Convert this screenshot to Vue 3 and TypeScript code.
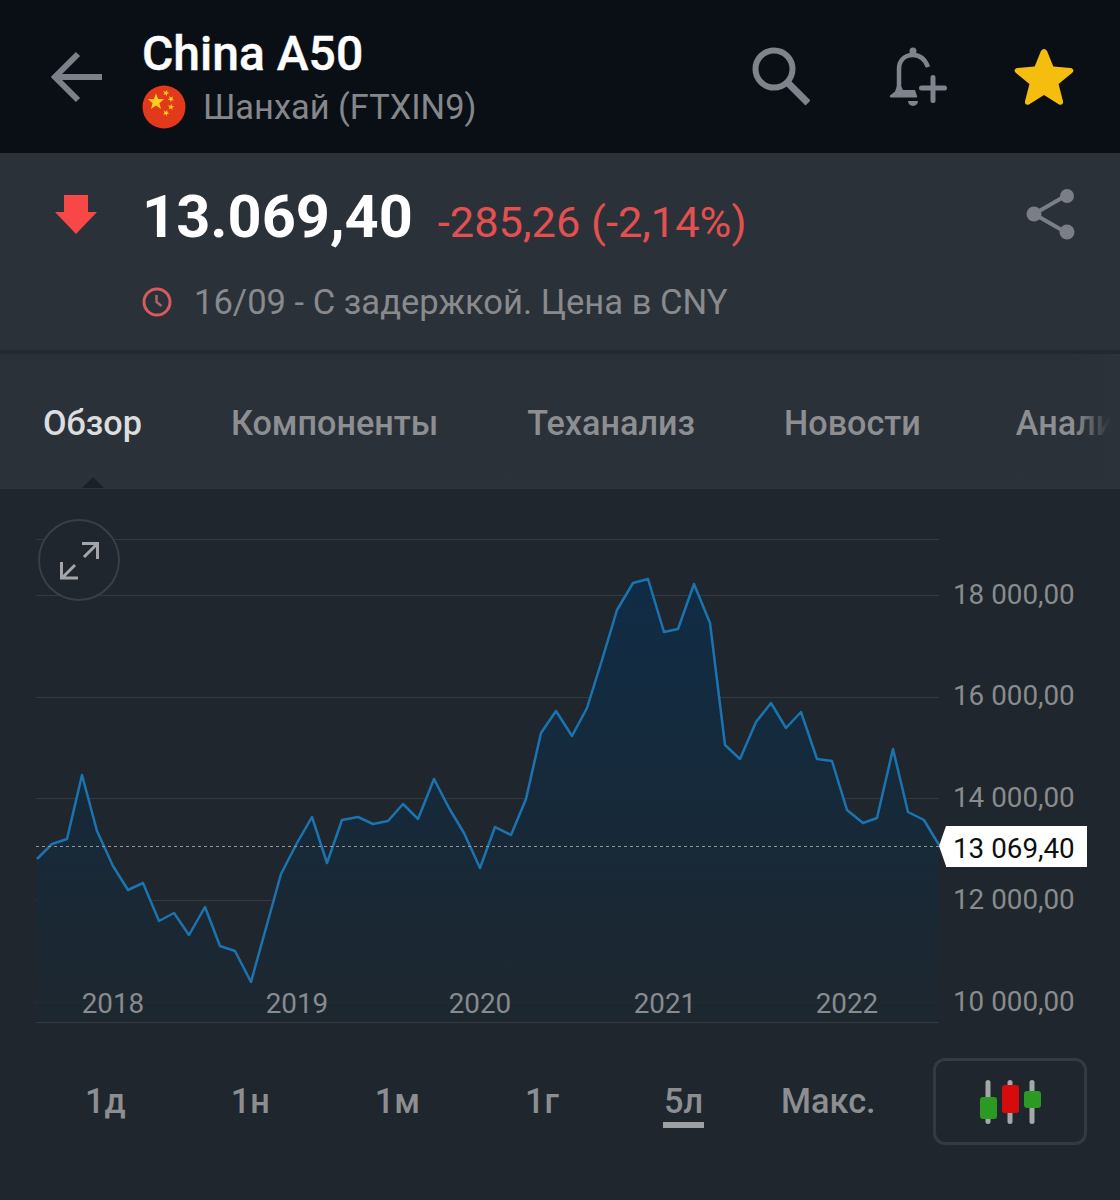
<script setup lang="ts">
const pts: [number, number][] = [
  [37,859],[52,844],[67,839],[82,775],[97,831],[113,866],[128,890],[143,883],[159,921],[174,913],
  [189,935],[205,907],[220,946],[235,951],[251,982],[266,928],[281,874],[297,843],[312,817],[327,863],
  [342,820],[358,817],[373,824],[388,821],[403,804],[418,819],[434,779],[449,808],[464,833],[480,868],
  [495,827],[511,835],[526,799],[541,733],[556,711],[572,736],[587,708],[602,660],[617,610],[633,583],
  [648,579],[664,632],[678,629],[694,584],[710,623],[725,745],[740,759],[756,722],[771,703],[786,728],
  [801,712],[817,759],[832,761],[847,810],[863,823],[877,818],[893,749],[908,812],[924,820],[939,845],
]
const top = 489
const line = pts.map(([x, y]) => `${x},${y - top}`).join(' ')
const area = `37,${1022 - top} ${line} 939,${1022 - top}`
const grid = [539, 595, 697, 798, 900, 1002, 1022].map((y) => y - top)
const axis = [
  { t: '18 000,00', y: 594 },
  { t: '16 000,00', y: 695 },
  { t: '14 000,00', y: 797 },
  { t: '12 000,00', y: 899 },
  { t: '10 000,00', y: 1001 },
]
const years = [
  { t: '2018', x: 113 },
  { t: '2019', x: 297 },
  { t: '2020', x: 480 },
  { t: '2021', x: 665 },
  { t: '2022', x: 847 },
]
const tabs = ['Обзор', 'Компоненты', 'Теханализ', 'Новости', 'Аналитика']
const ranges = ['1д', '1н', '1м', '1г', '5л', 'Макс.']

function star(cx: number, cy: number, r: number, rot = 0): string {
  const out: string[] = []
  for (let i = 0; i < 10; i++) {
    const rad = i % 2 === 0 ? r : r * 0.42
    const a = ((-90 + rot + i * 36) * Math.PI) / 180
    out.push(`${(cx + rad * Math.cos(a)).toFixed(2)},${(cy + rad * Math.sin(a)).toFixed(2)}`)
  }
  return out.join(' ')
}
const flagStars = [
  star(14, 17, 8.5),
  star(24, 8, 3.3, 20),
  star(29, 14, 3.3, 40),
  star(29, 22, 3.3, 10),
  star(24, 28, 3.3, 25),
]
</script>

<template>
  <div class="page">
    <header class="topbar">
      <svg class="back" width="56" height="52" viewBox="0 0 56 52" fill="none" stroke="#7d8088" stroke-width="6">
        <path d="M52 26H6M28 3 5 26l23 23" />
      </svg>
      <div class="title-block">
        <div class="title">China A50</div>
        <div class="subtitle">
          <svg class="flag" width="44" height="44" viewBox="0 0 44 44">
            <circle cx="22" cy="22" r="21.5" fill="#e3391b" />
            <polygon v-for="(s, i) in flagStars" :key="i" :points="s" fill="#f8cf20" />
          </svg>
          <span>Шанхай (FTXIN9)</span>
        </div>
      </div>
      <div class="actions">
        <svg class="ic-search" width="60" height="60" viewBox="0 0 60 60" fill="none" stroke="#7f838b">
          <circle cx="24" cy="23" r="18.500" stroke-width="6" />
          <path d="M38 37 58 57" stroke-width="7" />
        </svg>
        <svg class="ic-bell" width="60" height="60" viewBox="0 0 60 60" fill="none" stroke="#7f838b">
          <path d="M39 21C36 13 31 9 24 9 15 9 10 15 10 23V42" stroke-width="4.500" />
          <circle cx="24" cy="5" r="3.500" fill="#7f838b" stroke="none" />
          <path d="M8 40h4l2 4h12l2 6c.5 1 0 1.500-1 1.500H2c-1 0-1.500-1-1-2l5-4z" fill="#7f838b" stroke="none" />
          <path d="M19 55h10a5 5 0 0 1-10 0z" fill="#7f838b" stroke="none" />
          <path d="M44 31.500v23M32.500 42h23" stroke-width="5" stroke-linecap="round" />
        </svg>
        <svg class="ic-star" width="60" height="60" viewBox="2.600 0.300 54.800 54.800">
          <path d="M30 3c1.300 0 2.300.8 2.900 2.200l5.600 13.800 15.600 1.300c2.800.3 3.700 2.700 1.700 4.500L43.300 35l4 15.600c.6 2.800-1.500 4.300-3.900 2.900L30 45l-13.400 8.500c-2.400 1.400-4.500-.1-3.900-2.900l4-15.600L4.200 24.800c-2-1.800-1.100-4.200 1.700-4.500l15.600-1.300 5.600-13.800C27.700 3.800 28.700 3 30 3z" fill="#f5bd0e" />
        </svg>
      </div>
    </header>

    <section class="quote">
      <div class="quote-main">
        <svg class="down" width="42" height="40" viewBox="0 0 42 40">
          <path d="M9 0h24v17h9L21 39 0 17h9z" fill="#f74747" />
        </svg>
        <div class="price">13.069,40</div>
        <div class="change">-285,26 (-2,14%)</div>
        <svg class="share" width="50" height="54" viewBox="0 0 50 54" fill="#7a7e86" stroke="#7a7e86" stroke-width="4">
          <path d="M8 27 41 8M8 27l33 19" fill="none" />
          <circle cx="41" cy="9" r="7" stroke="none" />
          <circle cx="8" cy="27" r="7.500" stroke="none" />
          <circle cx="41" cy="45" r="7.500" stroke="none" />
        </svg>
      </div>
      <div class="quote-meta">
        <svg width="30" height="30" viewBox="0 0 30 30" fill="none" stroke="#d95a5e" stroke-width="3">
          <circle cx="15" cy="15" r="13" />
          <path d="M14.500 8v7l5 4" stroke-width="2.500" stroke="#a8656a" />
        </svg>
        <span>16/09 - С задержкой. Цена в CNY</span>
      </div>
    </section>

    <nav class="tabs">
      <span v-for="(t, i) in tabs" :key="t" class="tab" :class="{ active: i === 0, last: i === tabs.length - 1 }">{{ t }}</span>
    </nav>

    <section class="chart">
      <svg class="plot" width="1120" height="551" viewBox="0 0 1120 551">
        <defs>
          <linearGradient id="fillGrad" x1="0" y1="0" x2="0" y2="1">
            <stop offset="0" stop-color="#0f2c46" stop-opacity="0.97" />
            <stop offset="0.6" stop-color="#172938" stop-opacity="0.95" />
            <stop offset="1" stop-color="#1d2730" stop-opacity="0.8" />
          </linearGradient>
        </defs>
        <line v-for="g in grid" :key="g" x1="36" x2="939" :y1="g + 0.5" :y2="g + 0.5" stroke="#ffffff" stroke-opacity="0.09" stroke-width="1" />
        <polygon :points="area" fill="url(#fillGrad)" />
        <polyline :points="line" fill="none" stroke="#1b74b0" stroke-width="2.500" stroke-linejoin="round" />
        <line x1="36" x2="939" y1="357.500" y2="357.500" stroke="#8f969c" stroke-width="1" stroke-dasharray="3 3" />
        <text v-for="a in axis" :key="a.t" class="axis-text" x="953" :y="a.y - top + 10">{{ a.t }}</text>
        <text v-for="y in years" :key="y.t" class="axis-text" :x="y.x" y="524" text-anchor="middle">{{ y.t }}</text>
      </svg>
      <button class="expand" type="button" aria-label="Развернуть">
        <svg width="44" height="44" viewBox="0 0 44 44" fill="none" stroke="#a3a5a9" stroke-width="3">
          <path d="M25 5.500h15.500V21M39.500 6.500 27 19M4.500 24v16H21M5.500 39.500 18 27" />
        </svg>
      </button>
      <div class="last-tag">13 069,40</div>
    </section>

    <footer class="ranges">
      <div class="range-list">
        <span v-for="r in ranges" :key="r" class="range" :class="{ selected: r === '5л', max: r === 'Макс.' }">{{ r }}</span>
      </div>
      <div class="candle-btn">
        <svg width="66" height="46" viewBox="0 0 66 46">
          <rect x="8.500" y="1" width="5" height="44" rx="2.500" fill="#a5a7a9" />
          <rect x="30.500" y="1" width="5" height="44" rx="2.500" fill="#a5a7a9" />
          <rect x="52.500" y="1" width="5" height="44" rx="2.500" fill="#a5a7a9" />
          <rect x="3" y="18" width="17" height="22" rx="3" fill="#2b9a22" />
          <rect x="25" y="6" width="17" height="28" rx="3" fill="#d60b0b" />
          <rect x="47" y="12" width="17" height="17" rx="3" fill="#2b9a22" />
        </svg>
      </div>
    </footer>
  </div>
</template>

<style>
html, body { margin: 0; background: #1f262d; }
</style>

<style scoped>
.page {
  width: 1120px;
  height: 1200px;
  overflow: hidden;
  background: #1f262d;
  font-family: Roboto, "Noto Sans", sans-serif;
  display: flex;
  flex-direction: column;
}
.topbar {
  height: 153px;
  flex: none;
  box-sizing: border-box;
  background: #0a0f16;
  display: flex;
  align-items: center;
  padding: 0 46px 0 50px;
}
.back { flex: none; margin-right: 36px; }
.title-block { flex: 1; margin-top: 2px; }
.title {
  color: #fff;
  font-size: 48px;
  font-weight: 500;
  line-height: 54px;
  -webkit-text-stroke: 0.4px #fff;
}
.subtitle {
  display: flex;
  align-items: center;
  gap: 17px;
  margin-top: 4px;
  color: #85878b;
  font-size: 34.400px;
  line-height: 44px;
}
.flag { flex: none; }
.actions { display: flex; align-items: center; margin-top: -1px; }
.ic-search { flex: none; }
.ic-bell { flex: none; margin-left: 79px; }
.ic-star { flex: none; margin-left: 65px; }

.quote {
  height: 197px;
  flex: none;
  box-sizing: border-box;
  background: #2b3139;
  padding: 0 46px 0 54px;
}
.quote-main { display: flex; align-items: center; height: 128px; }
.down { flex: none; margin: -4px 45px 0 1px; }
.price { color: #fff; font-size: 59.500px; font-weight: 700; line-height: 72px; }
.change { color: #e25050; font-size: 43.400px; line-height: 48px; margin-left: 25px; margin-top: 12px; flex: 1; }
.share { flex: none; margin: -7px -2px 0 0; }
.quote-meta {
  display: flex;
  align-items: center;
  gap: 22px;
  margin: -3px 0 0 88px;
  color: #888a8d;
  font-size: 34.600px;
  line-height: 48px;
}
.tabs {
  height: 139px;
  flex: none;
  box-sizing: border-box;
  display: flex;
  align-items: center;
  gap: 89px;
  padding: 3px 0 0 43px;
  overflow: hidden;
  white-space: nowrap;
  position: relative;
  border-top: 4px solid #23282f;
  background: linear-gradient(#2a3038, #2c3239);
}
.tabs::after {
  content: "";
  position: absolute;
  right: 0;
  top: 0;
  bottom: 0;
  width: 46px;
  background: linear-gradient(90deg, rgba(44, 50, 57, 0), #2c3239 80%);
}
.tab { color: #8c8e91; font-size: 34.200px; font-weight: 500; flex: none; }
.tab.last { margin-left: 6px; }
.tab.active { color: #dcdddf; position: relative; }
.tab.active::after {
  content: "";
  position: absolute;
  left: 50%;
  bottom: -45px;
  margin-left: -10px;
  border-left: 11px solid transparent;
  border-right: 11px solid transparent;
  border-bottom: 11px solid #1b2027;
}
.chart { position: relative; height: 551px; flex: none; background: #1f262d; }
.plot { display: block; }
.axis-text { fill: #898b8e; font-family: Roboto, sans-serif; font-size: 27.800px; }
.expand {
  position: absolute;
  left: 38px;
  top: 30px;
  width: 82px;
  height: 82px;
  box-sizing: border-box;
  border: 2.500px solid #3a3f46;
  border-radius: 50%;
  background: #1f262d;
  padding: 0;
  display: flex;
  align-items: center;
  justify-content: center;
}
.last-tag {
  position: absolute;
  left: 946px;
  top: 337px;
  width: 141px;
  height: 41px;
  box-sizing: border-box;
  padding: 5px 0 0 7px;
  background: #fff;
  color: #0c0f12;
  font-size: 27.800px;
  line-height: 36px;
}
.last-tag::before {
  content: "";
  position: absolute;
  left: -7px;
  top: 0;
  border-top: 20.500px solid transparent;
  border-bottom: 20.500px solid transparent;
  border-right: 7px solid #fff;
}
.ranges { flex: 1; display: flex; align-items: flex-start; padding: 18px 33px 0 85px; }
.range-list { display: flex; flex: 1; gap: 105px; margin-top: 18px; }
.range {
  color: #8c8e91;
  font-size: 34.300px;
  font-weight: 500;
  line-height: 50px;
  position: relative;
}
.range.max { margin-left: -27px; }
.range.selected::after {
  content: "";
  position: absolute;
  left: -1px;
  right: -1px;
  bottom: -2px;
  height: 6px;
  background: #9d9fa2;
}
.candle-btn {
  width: 154px;
  height: 87px;
  flex: none;
  box-sizing: border-box;
  border: 3px solid #343a42;
  border-radius: 12px;
  display: flex;
  align-items: center;
  justify-content: center;
}
</style>
